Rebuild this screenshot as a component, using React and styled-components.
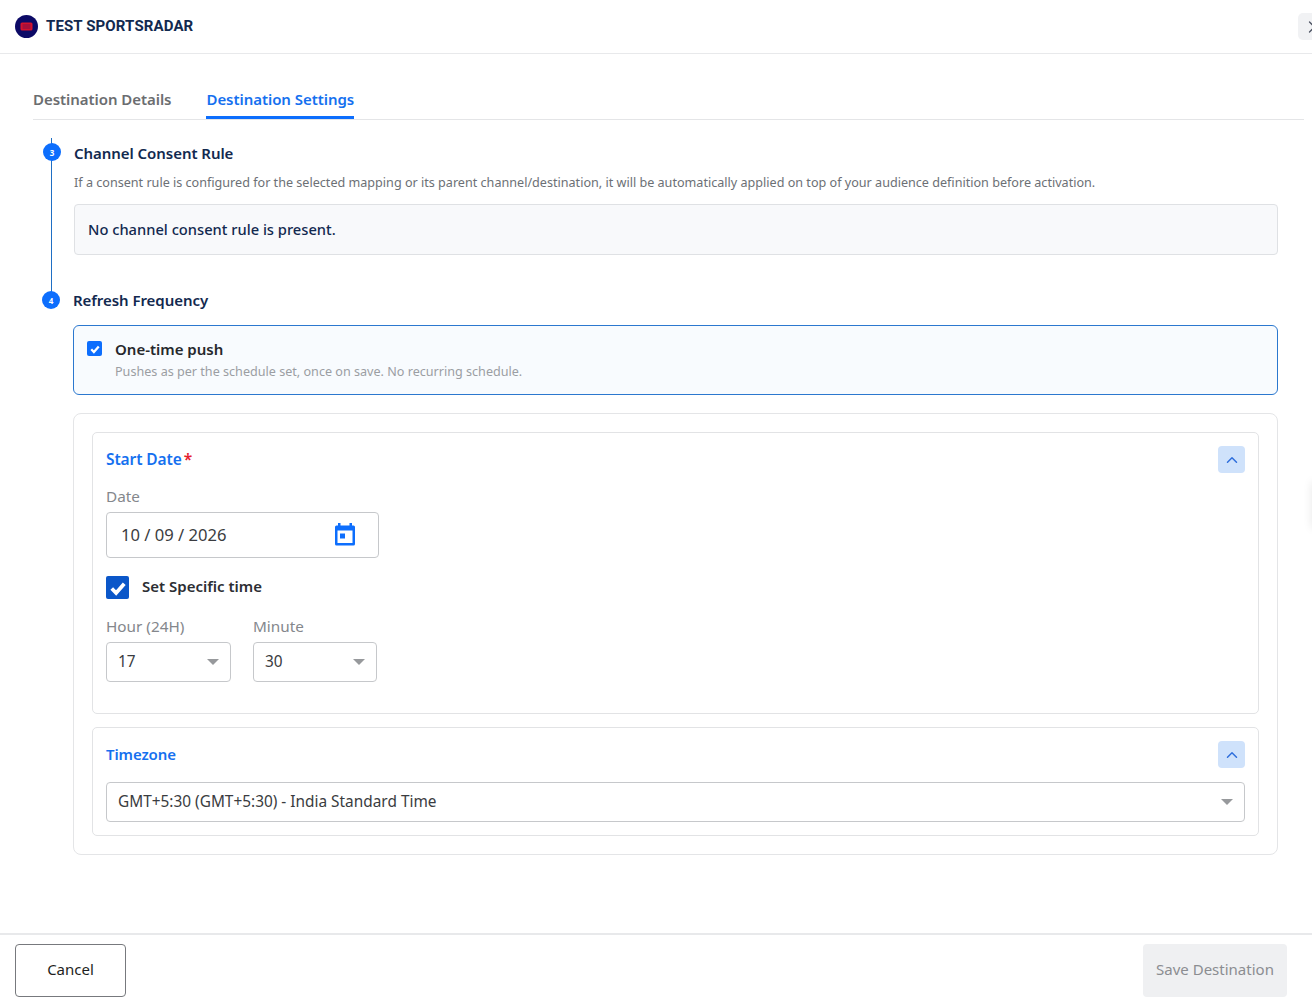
import styled, { createGlobalStyle } from "styled-components";
import { ChevronRight, ChevronUp } from "lucide-react";

const GlobalStyle = createGlobalStyle`
	html, body {
		margin: 0;
		padding: 0;
		height: 100%;
		background: #fff;
		overflow: hidden;
	}
	* {
		box-sizing: border-box;
	}
	#root {
		height: 100%;
	}
`;

const Page = styled.div`
	display: flex;
	flex-direction: column;
	height: 1006px;
	font-family: "Noto Sans", "Open Sans", sans-serif;
	color: #0f2a52;
`;

const Header = styled.header`
	display: flex;
	align-items: center;
	justify-content: space-between;
	height: 54px;
	padding-left: 15px;
	border-bottom: 1px solid #e8e9eb;
`;

const Brand = styled.div`
	display: flex;
	align-items: center;
	gap: 8px;
`;

const BrandName = styled.span`
	font-family: "Roboto", sans-serif;
	font-size: 15px;
	font-weight: 700;
	letter-spacing: 0.12px;
	color: #12294f;
	margin-top: -2px;
`;

const CloseButton = styled.button`
	display: flex;
	align-items: center;
	justify-content: flex-start;
	width: 27px;
	height: 27px;
	margin-right: -13px;
	padding: 0 0 0 4px;
	border: 0;
	border-radius: 5px;
	background: #f1f2f4;
	color: #4a5160;
`;

const Main = styled.main`
	flex: 1;
	padding: 27px 8px 0 33px;
`;

const Tabs = styled.nav`
	display: flex;
	gap: 35px;
	height: 39px;
	border-bottom: 1px solid #e4e5e7;
`;

const Tab = styled.div`
	height: 38px;
	padding-top: 8px;
	font-size: 15px;
	font-weight: 600;
	letter-spacing: -0.05px;
	color: ${(props) => (props.$active ? "#1570ef" : "#6b6d70")};
	border-bottom: ${(props) => (props.$active ? "3px solid #0d6efd" : "0")};
`;

const Steps = styled.div`
	position: relative;
	padding: 21px 26px 0 8px;
`;

const StepLine = styled.div`
	position: absolute;
	left: 18px;
	top: 18px;
	width: 1px;
	height: 162px;
	background: #1f6fc4;
`;

const Step = styled.section`
	margin-top: ${(props) => props.$top || 0}px;
`;

const StepHead = styled.div`
	position: relative;
	display: flex;
	align-items: center;
	gap: 13px;
	height: 24px;
`;

const StepDot = styled.span`
	position: relative;
	display: flex;
	align-items: center;
	justify-content: center;
	flex: none;
	width: 18px;
	height: 18px;
	margin-left: ${(props) => props.$shift || 0}px;
	margin-top: ${(props) => props.$lift || 0}px;
	border-radius: 50%;
	background: #0d6efd;
	color: #fff;
	font-size: 8px;
	font-weight: 700;
`;

const StepTitle = styled.h2`
	margin: 0;
	font-size: 15px;
	font-weight: 600;
	letter-spacing: -0.05px;
	color: #12294f;
`;

const StepText = styled.p`
	margin: 9px 0 0 33px;
	font-size: 12.6px;
	line-height: 18px;
	color: #6c7075;
`;

const NoticeBox = styled.div`
	display: flex;
	align-items: center;
	height: 51px;
	margin: 12px 0 0 33px;
	padding: 0 0 2px 13px;
	border: 1px solid #dfe1e4;
	border-radius: 4px;
	background: #f8f9fb;
	font-size: 14.7px;
	font-weight: 500;
	color: #12294f;
`;

const PushCard = styled.label`
	display: flex;
	gap: 13px;
	height: 70px;
	margin: 13px 0 0 32px;
	padding: 14px 13px;
	border: 1px solid #2b78cf;
	border-radius: 6px;
	background: #f8fbfe;
`;

const SmallCheck = styled.span`
	display: flex;
	align-items: center;
	justify-content: center;
	flex: none;
	width: 15px;
	height: 15px;
	margin-top: 1px;
	border-radius: 2px;
	background: #0d6efd;
`;

const PushTitle = styled.div`
	font-size: 15px;
	font-weight: 600;
	line-height: 18px;
	color: #26282c;
`;

const PushText = styled.div`
	margin-top: 5px;
	font-size: 12.6px;
	line-height: 18px;
	color: #9b9ea3;
`;

const OuterCard = styled.div`
	display: flex;
	flex-direction: column;
	gap: 13px;
	height: 442px;
	margin: 18px 0 0 32px;
	padding: 18px;
	border: 1px solid #e4e5e7;
	border-radius: 8px;
`;

const InnerCard = styled.div`
	height: ${(props) => props.$height}px;
	padding: 13px 13px 0;
	border: 1px solid #e2e3e5;
	border-radius: 5px;
`;

const CardHead = styled.div`
	display: flex;
	align-items: center;
	justify-content: space-between;
	height: 27px;
`;

const CardTitle = styled.h3`
	margin: 0 0 2px;
	font-size: ${(props) => props.$size || 15.5}px;
	font-weight: 600;
	letter-spacing: -0.1px;
	color: #1570ef;

	& span {
		margin-left: 2px;
		color: #e5202e;
	}
`;

const ToggleButton = styled.button`
	display: flex;
	align-items: center;
	justify-content: center;
	width: 27px;
	height: 27px;
	padding: 0;
	border: 0;
	border-radius: 4px;
	background: #cfe2fb;
	color: #2f6fdc;
`;

const FieldLabel = styled.div`
	font-size: 15.3px;
	line-height: 20px;
	color: #84878c;
`;

const DateField = styled.div`
	display: flex;
	align-items: center;
	justify-content: space-between;
	width: 273px;
	height: 46px;
	margin-top: 6px;
	padding: 0 22px 2px 14px;
	border: 1px solid #c6c8cb;
	border-radius: 4px;
	font-size: 16.6px;
	color: #3a3c40;
`;

const DateBlock = styled.div`
	margin-top: 13px;
`;

const TimeCheckRow = styled.label`
	display: flex;
	align-items: center;
	gap: 13px;
	margin-top: 18px;
	font-size: 15px;
	font-weight: 600;
	color: #2c2e33;
`;

const TimeCheckText = styled.span`
	margin-top: -3px;
`;

const BigCheck = styled.span`
	display: flex;
	align-items: center;
	justify-content: center;
	width: 23px;
	height: 23px;
	border-radius: 2px;
	background: #0b57c9;
`;

const TimeRow = styled.div`
	display: flex;
	gap: 22px;
	margin-top: 17px;
`;

const SelectBox = styled.div`
	display: flex;
	align-items: center;
	justify-content: space-between;
	width: ${(props) => props.$width || "100%"};
	height: 40px;
	margin-top: ${(props) => props.$top || 6}px;
	padding: 0 11px 2px 11px;
	border: 1px solid #c6c8cb;
	border-radius: 4px;
	font-size: 15.4px;
	color: #3a3c40;
`;

const Caret = styled.span`
	width: 0;
	height: 0;
	margin-top: 2px;
	border-left: 6px solid transparent;
	border-right: 6px solid transparent;
	border-top: 6px solid #97999c;
`;

const Footer = styled.footer`
	display: flex;
	align-items: flex-start;
	justify-content: space-between;
	height: 73px;
	padding: 9px 25px 0 15px;
	border-top: 2px solid #e8e9eb;
`;

const FooterButton = styled.button`
	width: ${(props) => props.$width}px;
	height: 53px;
	padding: 0 0 4px;
	border-radius: 4px;
	border: ${(props) => (props.$disabled ? "0" : "1px solid #77797d")};
	background: ${(props) => (props.$disabled ? "#eff0f2" : "#fff")};
	color: ${(props) => (props.$disabled ? "#8b8d91" : "#1e1f22")};
	font-family: inherit;
	font-size: 15px;
`;

const SideHint = styled.div`
	position: fixed;
	top: 482px;
	right: -8px;
	width: 8px;
	height: 46px;
	box-shadow: 0 0 10px rgba(0, 0, 0, 0.1);
`;

const CheckMark = ({ size }) => (
	<svg width={size} height={size} viewBox="0 0 16 16" fill="none">
		<path d="M3 8.4 6.5 12 13 4.6" stroke="#fff" strokeWidth="3" />
	</svg>
);

const LogoMark = () => (
	<svg width="23" height="23" viewBox="0 0 23 23">
		<circle cx="11.5" cy="11.5" r="11.5" fill="#0c0a66" />
		<rect x="5.500" y="7.500" width="12" height="8" rx="1.5" fill="#d2122e" />
		<rect x="7.500" y="9" width="8" height="5" fill="#a80f3a" />
	</svg>
);

const CalendarIcon = () => (
	<svg width="22" height="24" viewBox="0 0 22 24">
		<path
			d="M4 1h2.500v2.500h9V1H18v2.500h1.500A1.500 1.500 0 0 1 21 5v17a1.500 1.500 0 0 1-1.500 1.500h-17A1.500 1.500 0 0 1 1 22V5a1.500 1.500 0 0 1 1.500-1.500H4z"
			fill="#0d6efd"
		/>
		<rect x="3.500" y="8.500" width="15" height="12.500" fill="#fff" />
		<rect x="6" y="11.500" width="5" height="5" fill="#0d6efd" />
	</svg>
);

function App() {
	return (
		<Page>
			<GlobalStyle />
			<Header>
				<Brand>
					<LogoMark />
					<BrandName>TEST SPORTSRADAR</BrandName>
				</Brand>
				<CloseButton aria-label="Close">
					<ChevronRight size={20} strokeWidth={1.5} />
				</CloseButton>
			</Header>

			<Main>
				<Tabs>
					<Tab>Destination Details</Tab>
					<Tab $active>Destination Settings</Tab>
				</Tabs>

				<Steps>
					<StepLine />
					<Step>
						<StepHead>
							<StepDot $shift={2} $lift={-2}>
								3
							</StepDot>
							<StepTitle>Channel Consent Rule</StepTitle>
						</StepHead>
						<StepText>
							If a consent rule is configured for the selected mapping or its parent channel/destination, it will be
							automatically applied on top of your audience definition before activation.
						</StepText>
						<NoticeBox>No channel consent rule is present.</NoticeBox>
					</Step>

					<Step $top={33}>
						<StepHead>
							<StepDot $shift={1}>4</StepDot>
							<StepTitle>Refresh Frequency</StepTitle>
						</StepHead>
						<PushCard>
							<SmallCheck>
								<CheckMark size={12} />
							</SmallCheck>
							<div>
								<PushTitle>One-time push</PushTitle>
								<PushText>Pushes as per the schedule set, once on save. No recurring schedule.</PushText>
							</div>
						</PushCard>

						<OuterCard>
							<InnerCard $height={282}>
								<CardHead>
									<CardTitle>
										Start Date<span>*</span>
									</CardTitle>
									<ToggleButton aria-label="Collapse">
										<ChevronUp size={18} strokeWidth={2} />
									</ToggleButton>
								</CardHead>
								<DateBlock>
									<FieldLabel>Date</FieldLabel>
									<DateField>
										10 / 09 / 2026
										<CalendarIcon />
									</DateField>
								</DateBlock>
								<TimeCheckRow>
									<BigCheck>
										<CheckMark size={20} />
									</BigCheck>
									<TimeCheckText>Set Specific time</TimeCheckText>
								</TimeCheckRow>
								<TimeRow>
									<div>
										<FieldLabel>Hour (24H)</FieldLabel>
										<SelectBox $width="125px">
											17
											<Caret />
										</SelectBox>
									</div>
									<div>
										<FieldLabel>Minute</FieldLabel>
										<SelectBox $width="124px">
											30
											<Caret />
										</SelectBox>
									</div>
								</TimeRow>
							</InnerCard>

							<InnerCard $height={109}>
								<CardHead>
									<CardTitle $size={15}>Timezone</CardTitle>
									<ToggleButton aria-label="Collapse">
										<ChevronUp size={18} strokeWidth={2} />
									</ToggleButton>
								</CardHead>
								<SelectBox $top={14}>
									GMT+5:30 (GMT+5:30) - India Standard Time
									<Caret />
								</SelectBox>
							</InnerCard>
						</OuterCard>
					</Step>
				</Steps>
			</Main>

			<Footer>
				<FooterButton $width={111}>Cancel</FooterButton>
				<FooterButton $width={144} $disabled>
					Save Destination
				</FooterButton>
			</Footer>
			<SideHint />
		</Page>
	);
}

export default App;
